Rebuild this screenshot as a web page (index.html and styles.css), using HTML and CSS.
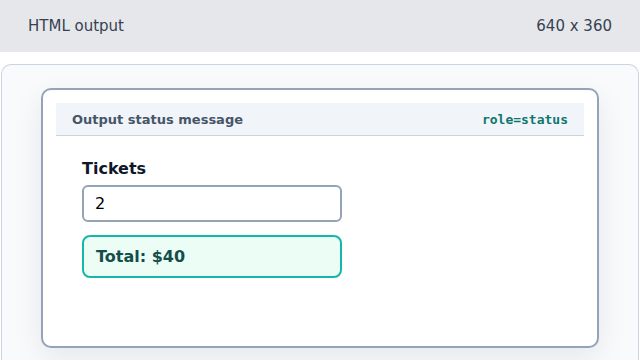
FILE: index.html
```html
<!DOCTYPE html>
<html lang="en">
<head>
<meta charset="utf-8">
<title>HTML output</title>
<link rel="stylesheet" href="styles.css">
</head>
<body>
<header class="topbar">
  <span class="topbar-title">HTML output</span>
  <span class="topbar-size">640 x 360</span>
</header>
<main class="frame">
  <section class="card">
    <div class="card-head">
      <span class="card-title">Output status message</span>
      <code class="card-role">role=status</code>
    </div>
    <div class="card-body">
      <label class="field-label" for="tickets">Tickets</label>
      <input class="field-input" id="tickets" type="text" value="2">
      <output class="total" role="status" for="tickets">Total: $40</output>
    </div>
  </section>
</main>
</body>
</html>
```
FILE: styles.css
```css
* { box-sizing: border-box; }
html, body { margin: 0; padding: 0; }
body {
  width: 640px;
  height: 360px;
  overflow: hidden;
  background: #ffffff;
  font-family: "DejaVu Sans", "Noto Sans", sans-serif;
}
.topbar {
  height: 52px;
  background: #e5e7eb;
  display: flex;
  align-items: center;
  justify-content: space-between;
  padding: 0 28px;
  font-size: 15px;
  color: #374151;
}
.frame {
  margin: 12px 1px 0 1px;
  height: 296px;
  border: 1px solid #cbd5e1;
  border-bottom: 0;
  border-radius: 10px 10px 0 0;
  background: #f8fafc;
  padding: 23px 39px 0 39px;
}
.card {
  height: 260px;
  background: #ffffff;
  border: 2px solid #94a3b8;
  border-radius: 10px;
  padding: 13px;
  box-shadow: 0 10px 30px rgba(15, 23, 42, 0.08);
}
.card-head {
  height: 33px;
  background: #f1f5f9;
  border-bottom: 1px solid #cbd5e1;
  display: flex;
  align-items: center;
  justify-content: space-between;
  padding: 0 16px;
}
.card-title {
  font-size: 13px;
  font-weight: bold;
  color: #475569;
}
.card-role {
  font-family: "DejaVu Sans Mono", "Liberation Mono", monospace;
  font-size: 13px;
  font-weight: bold;
  color: #0f766e;
}
.card-body {
  padding: 23px 26px 22px;
  display: flex;
  flex-direction: column;
  align-items: flex-start;
}
.field-label {
  font-size: 16px;
  font-weight: bold;
  line-height: 19px;
  color: #0f172a;
  margin-bottom: 7px;
}
.field-input {
  width: 260px;
  height: 37px;
  border: 2px solid #94a3b8;
  border-radius: 6px;
  padding: 0 11px;
  font-family: "DejaVu Sans", sans-serif;
  font-size: 16px;
  color: #000000;
  background: #ffffff;
  outline: none;
  margin: 0 0 13px 0;
}
.total {
  display: flex;
  align-items: center;
  width: 260px;
  height: 43px;
  border: 2px solid #14b8a6;
  border-radius: 8px;
  background: #ecfdf5;
  padding: 0 12px;
  font-size: 16px;
  font-weight: bold;
  color: #134e4a;
}
```
